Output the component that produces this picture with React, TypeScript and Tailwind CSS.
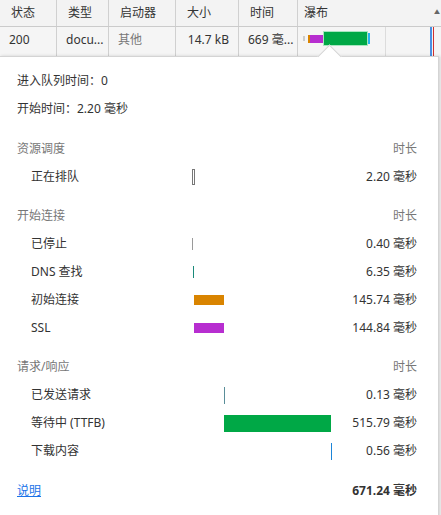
import React from 'react';

const TOTAL = 671.24;
const TRACK = 139;

type Phase = {
  label: string;
  start: number;
  dur: number;
  kind: 'queue' | 'tick' | 'line' | 'bar' | 'thick';
  color: string;
};

const sections: { title: string; gap: string; items: Phase[] }[] = [
  {
    title: '资源调度',
    gap: 'mt-[12px]',
    items: [{ label: '正在排队', start: 0, dur: 2.2, kind: 'queue', color: '#888' }],
  },
  {
    title: '开始连接',
    gap: 'mt-[11px]',
    items: [
      { label: '已停止', start: 2.2, dur: 0.4, kind: 'tick', color: '#9a9a9a' },
      { label: 'DNS 查找', start: 2.6, dur: 6.35, kind: 'tick', color: '#1a8a7a' },
      { label: '初始连接', start: 9.0, dur: 145.74, kind: 'bar', color: '#d98400' },
      { label: 'SSL', start: 9.9, dur: 144.84, kind: 'bar', color: '#b72ed0' },
    ],
  },
  {
    title: '请求/响应',
    gap: 'mt-[11px]',
    items: [
      { label: '已发送请求', start: 154.74, dur: 0.13, kind: 'line', color: '#5a8e99' },
      { label: '等待中 (TTFB)', start: 154.87, dur: 515.79, kind: 'thick', color: '#00a846' },
      { label: '下载内容', start: 670.66, dur: 0.56, kind: 'line', color: '#1d85d8' },
    ],
  },
];

const px = (ms: number) => (ms / TOTAL) * TRACK;

function Track({ p }: { p: Phase }) {
  const offset = px(p.start);
  let bar: React.ReactNode;
  if (p.kind === 'queue') {
    bar = <div className="h-[16px] w-[3px] border border-[#777]" />;
  } else if (p.kind === 'tick') {
    bar = <div className="h-[12px] w-px" style={{ background: p.color }} />;
  } else if (p.kind === 'line') {
    bar = <div className="h-[17px] w-px" style={{ background: p.color }} />;
  } else {
    bar = (
      <div
        className={p.kind === 'thick' ? 'h-[17px]' : 'h-[10px]'}
        style={{ width: px(p.dur), background: p.color }}
      />
    );
  }
  return (
    <div className="flex items-center h-full" style={{ paddingLeft: offset }}>
      {bar}
    </div>
  );
}

const cols = [
  { label: '状态', w: 57, v: '200', cls: 'text-[#333]' },
  { label: '类型', w: 52, v: 'docu...', cls: 'text-[#333]' },
  { label: '启动器', w: 67, v: '其他', cls: 'text-[#777]' },
  { label: '大小', w: 63, v: '14.7 kB', cls: 'text-[#333] text-right' },
  { label: '时间', w: 59, v: '669 毫...', cls: 'text-[#333]' },
];

export default function App() {
  return (
    <div
      className="relative w-[441px] h-[515px] overflow-hidden bg-[#f3f3f3] text-[12px]"
      style={{ fontFamily: '"Noto Sans", "Noto Sans CJK SC", sans-serif' }}
    >
      {/* header */}
      <div className="flex h-[27px] bg-[#f3f3f3] border-b border-[#cbcbcb] text-[#333]">
        {cols.map((c) => (
          <div key={c.label} className="flex items-center pl-[11px] border-r border-[#d0d0d0]" style={{ width: c.w }}>
            {c.label}
          </div>
        ))}
        <div className="relative flex flex-1 items-center pl-[6px]">
          瀑布
          <span className="absolute right-[1px] top-[8px] text-[6px] text-[#666]">▲</span>
        </div>
      </div>

      {/* row */}
      <div className="flex h-[30px] bg-[#f5f5f5] text-[#333]">
        {cols.map((c) => (
          <div
            key={c.label}
            className={`pt-[4px] px-[9px] whitespace-nowrap overflow-hidden border-r border-[#d0d0d0] ${c.cls}`}
            style={{ width: c.w }}
          >
            {c.v}
          </div>
        ))}
        <div className="flex flex-1">
          <div className="flex w-[88px] items-start pt-[4px] pl-[5px] border-r border-[#dcdcdc]">
            <div className="flex items-center h-[15px]">
              <div className="h-[5px] w-[2px] bg-[#ccc] mr-[3px]" />
              <div className="h-[8px] w-[2px] bg-[#d98400]" />
              <div className="h-[8px] w-[13px] bg-[#b72ed0]" />
              <div className="h-[15px] w-[45px] bg-[#00a846] border border-[#a8e6c0]" />
              <div className="h-[11px] w-[2px] bg-[#27b4ef]" />
            </div>
          </div>
          <div className="flex flex-1 pl-[44px]">
            <div className="w-[2px] bg-[#4a90e2]" />
            <div className="w-px ml-px bg-[#d03030]" />
          </div>
        </div>
      </div>

      {/* popup */}
      <div className="absolute left-0 top-[56px] w-[439px] h-[470px] bg-white border-t border-r border-[#d4d4d4] shadow-[1px_0_3px_rgba(0,0,0,0.15)] pl-[17px] pr-[21px] pt-[10px] text-[#333]">
        <div className="absolute left-[321px] top-[-9px] h-[17px] w-[17px] rotate-45 bg-white border-l border-t border-[#d4d4d4]" />
        <div className="relative h-[28px] flex items-center">进入队列时间：0</div>
        <div className="relative h-[28px] flex items-center">开始时间：2.20 毫秒</div>
        {sections.map((s) => (
          <div key={s.title} className={s.gap}>
            <div className="h-[28px] flex items-center justify-between text-[#777]">
              <span>{s.title}</span>
              <span>时长</span>
            </div>
            {s.items.map((p) => (
              <div key={p.label} className="grid grid-cols-[161px_139px_1fr] h-[28px] pl-[14px]">
                <div className="flex items-center">{p.label}</div>
                <Track p={p} />
                <div className="flex items-center justify-end">{p.dur.toFixed(2)} 毫秒</div>
              </div>
            ))}
          </div>
        ))}
        <div className="mt-[12px] h-[28px] flex items-center justify-between">
          <a href="#" className="text-[#1a73e8] underline">说明</a>
          <span className="font-bold">671.24 毫秒</span>
        </div>
      </div>
    </div>
  );
}
